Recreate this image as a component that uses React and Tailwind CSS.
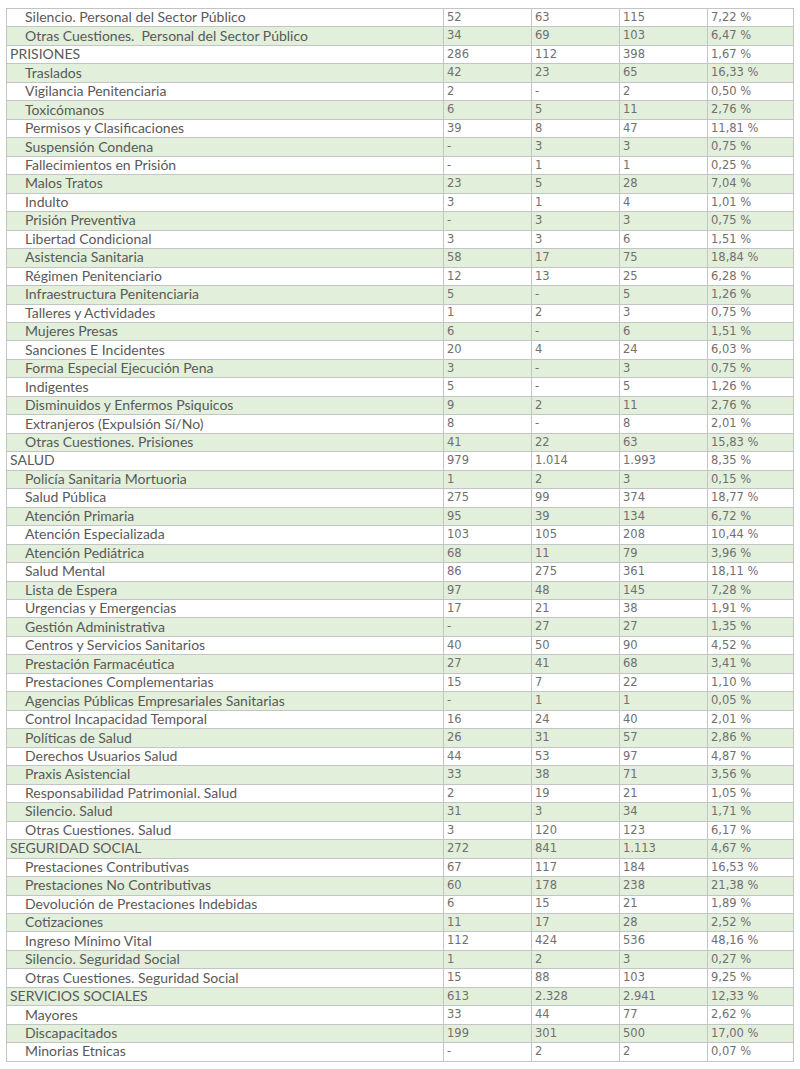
import React from "react";

const rows = [
  ["Silencio. Personal del Sector Público", "52", "63", "115", "7,22 %", 1],
  ["Otras Cuestiones.  Personal del Sector Público", "34", "69", "103", "6,47 %", 1],
  ["PRISIONES", "286", "112", "398", "1,67 %", 0],
  ["Traslados", "42", "23", "65", "16,33 %", 1],
  ["Vigilancia Penitenciaria", "2", "-", "2", "0,50 %", 1],
  ["Toxicómanos", "6", "5", "11", "2,76 %", 1],
  ["Permisos y Clasificaciones", "39", "8", "47", "11,81 %", 1],
  ["Suspensión Condena", "-", "3", "3", "0,75 %", 1],
  ["Fallecimientos en Prisión", "-", "1", "1", "0,25 %", 1],
  ["Malos Tratos", "23", "5", "28", "7,04 %", 1],
  ["Indulto", "3", "1", "4", "1,01 %", 1],
  ["Prisión Preventiva", "-", "3", "3", "0,75 %", 1],
  ["Libertad Condicional", "3", "3", "6", "1,51 %", 1],
  ["Asistencia Sanitaria", "58", "17", "75", "18,84 %", 1],
  ["Régimen Penitenciario", "12", "13", "25", "6,28 %", 1],
  ["Infraestructura Penitenciaria", "5", "-", "5", "1,26 %", 1],
  ["Talleres y Actividades", "1", "2", "3", "0,75 %", 1],
  ["Mujeres Presas", "6", "-", "6", "1,51 %", 1],
  ["Sanciones E Incidentes", "20", "4", "24", "6,03 %", 1],
  ["Forma Especial Ejecución Pena", "3", "-", "3", "0,75 %", 1],
  ["Indigentes", "5", "-", "5", "1,26 %", 1],
  ["Disminuidos y Enfermos Psiquicos", "9", "2", "11", "2,76 %", 1],
  ["Extranjeros (Expulsión Sí/No)", "8", "-", "8", "2,01 %", 1],
  ["Otras Cuestiones. Prisiones", "41", "22", "63", "15,83 %", 1],
  ["SALUD", "979", "1.014", "1.993", "8,35 %", 0],
  ["Policía Sanitaria Mortuoria", "1", "2", "3", "0,15 %", 1],
  ["Salud Pública", "275", "99", "374", "18,77 %", 1],
  ["Atención Primaria", "95", "39", "134", "6,72 %", 1],
  ["Atención Especializada", "103", "105", "208", "10,44 %", 1],
  ["Atención Pediátrica", "68", "11", "79", "3,96 %", 1],
  ["Salud Mental", "86", "275", "361", "18,11 %", 1],
  ["Lista de Espera", "97", "48", "145", "7,28 %", 1],
  ["Urgencias y Emergencias", "17", "21", "38", "1,91 %", 1],
  ["Gestión Administrativa", "-", "27", "27", "1,35 %", 1],
  ["Centros y Servicios Sanitarios", "40", "50", "90", "4,52 %", 1],
  ["Prestación Farmacéutica", "27", "41", "68", "3,41 %", 1],
  ["Prestaciones Complementarias", "15", "7", "22", "1,10 %", 1],
  ["Agencias Públicas Empresariales Sanitarias", "-", "1", "1", "0,05 %", 1],
  ["Control Incapacidad Temporal", "16", "24", "40", "2,01 %", 1],
  ["Políticas de Salud", "26", "31", "57", "2,86 %", 1],
  ["Derechos Usuarios Salud", "44", "53", "97", "4,87 %", 1],
  ["Praxis Asistencial", "33", "38", "71", "3,56 %", 1],
  ["Responsabilidad Patrimonial. Salud", "2", "19", "21", "1,05 %", 1],
  ["Silencio. Salud", "31", "3", "34", "1,71 %", 1],
  ["Otras Cuestiones. Salud", "3", "120", "123", "6,17 %", 1],
  ["SEGURIDAD SOCIAL", "272", "841", "1.113", "4,67 %", 0],
  ["Prestaciones Contributivas", "67", "117", "184", "16,53 %", 1],
  ["Prestaciones No Contributivas", "60", "178", "238", "21,38 %", 1],
  ["Devolución de Prestaciones Indebidas", "6", "15", "21", "1,89 %", 1],
  ["Cotizaciones", "11", "17", "28", "2,52 %", 1],
  ["Ingreso Mínimo Vital", "112", "424", "536", "48,16 %", 1],
  ["Silencio. Seguridad Social", "1", "2", "3", "0,27 %", 1],
  ["Otras Cuestiones. Seguridad Social", "15", "88", "103", "9,25 %", 1],
  ["SERVICIOS SOCIALES", "613", "2.328", "2.941", "12,33 %", 0],
  ["Mayores", "33", "44", "77", "2,62 %", 1],
  ["Discapacitados", "199", "301", "500", "17,00 %", 1],
  ["Minorias Etnicas", "-", "2", "2", "0,07 %", 1],
];

const num = "border border-[#c4c4c4] p-0 pl-[3px] font-['DejaVu_Sans',sans-serif] text-[11.5px] text-[#707070]";

export default function App() {
  return (
    <div className="w-[800px] h-[1069px] bg-white pt-2 pl-[6px]">
      <table className="border-collapse table-fixed w-[787px] text-[#595959] font-['Lato',sans-serif] text-[14px] leading-none">
        <colgroup>
          <col className="w-[437px]" />
          <col className="w-[88px]" />
          <col className="w-[88px]" />
          <col className="w-[88px]" />
          <col className="w-[86px]" />
        </colgroup>
        <tbody>
          {rows.map(([label, a, b, c, pct, indent], i) => (
            <tr key={i} className={`h-[18.47px] ${i % 2 === 1 ? "bg-[#e2efda]" : "bg-white"}`}>
              <td className={`border border-[#c4c4c4] p-0 pb-px whitespace-pre ${indent ? "pl-[18px]" : "pl-[3px]"}`}>{label}</td>
              <td className={num}>{a}</td>
              <td className={num}>{b}</td>
              <td className={num}>{c}</td>
              <td className={num}>{pct}</td>
            </tr>
          ))}
        </tbody>
      </table>
    </div>
  );
}
